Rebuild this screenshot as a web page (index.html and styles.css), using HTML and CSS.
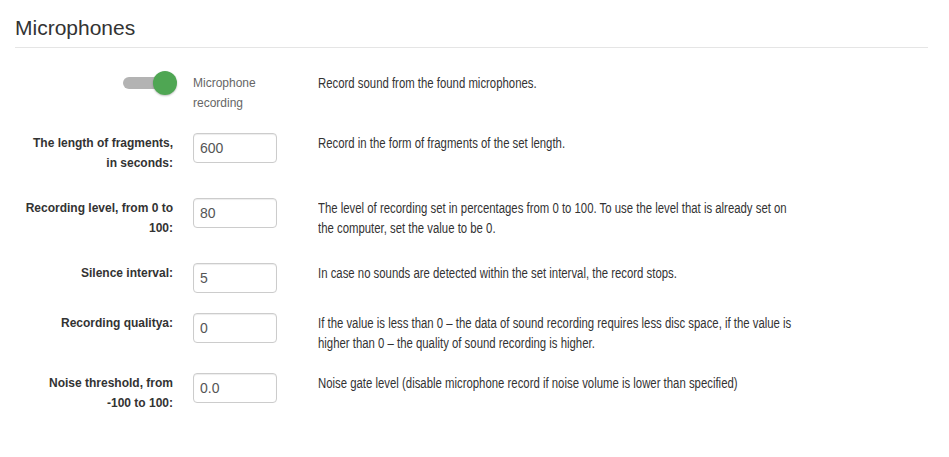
FILE: index.html
```html
<!DOCTYPE html>
<html>
<head>
<meta charset="utf-8">
<link rel="stylesheet" href="styles.css">
</head>
<body>
<div class="page">
  <h2 class="title">Microphones</h2>
  <div class="form">
    <div class="label toggle-cell">
      <span class="toggle"><span class="track"></span><span class="knob"></span></span>
    </div>
    <div class="toggle-text">Microphone recording</div>
    <div class="desc">Record sound from the found microphones.</div>

    <div class="label">The length of fragments, in seconds:</div>
    <div><input class="field" type="text" value="600"></div>
    <div class="desc">Record in the form of fragments of the set length.</div>

    <div class="label">Recording level, from 0 to 100:</div>
    <div><input class="field" type="text" value="80"></div>
    <div class="desc">The level of recording set in percentages from 0 to 100. To use the level that is already set on the computer, set the value to be 0.</div>

    <div class="label">Silence interval:</div>
    <div><input class="field" type="text" value="5"></div>
    <div class="desc">In case no sounds are detected within the set interval, the record stops.</div>

    <div class="label">Recording qualitya:</div>
    <div><input class="field" type="text" value="0"></div>
    <div class="desc">If the value is less than 0 – the data of sound recording requires less disc space, if the value is higher than 0 – the quality of sound recording is higher.</div>

    <div class="label">Noise threshold, from -100 to 100:</div>
    <div><input class="field" type="text" value="0.0"></div>
    <div class="desc">Noise gate level (disable microphone record if noise volume is lower than specified)</div>
  </div>
</div>
</body>
</html>
```

FILE: styles.css
```css
html, body {
  margin: 0;
  padding: 0;
  background: #fff;
}
body {
  font-family: "Liberation Sans", Arial, sans-serif;
  color: #333;
}
.page {
  width: 913px;
  padding-left: 15px;
}
.title {
  margin: 16px 0 0;
  padding-bottom: 7px;
  font-size: 21px;
  line-height: 24px;
  font-weight: normal;
  color: #333;
  border-bottom: 1px solid #e5e5e5;
}
.form {
  margin-top: 25px;
  margin-left: 8px;
  display: grid;
  grid-template-columns: 150px 84px 611px;
  column-gap: 20px;
  row-gap: 20px;
  align-items: start;
}
.label {
  font-size: 12px;
  line-height: 20px;
  font-weight: bold;
  text-align: right;
  color: #333;
  padding-bottom: 5px;
}
.toggle-cell {
  display: flex;
  justify-content: flex-end;
  padding-bottom: 0;
}
.toggle {
  position: relative;
  display: block;
  width: 54px;
  height: 24px;
  margin-top: -2px;
  margin-right: -4px;
}
.track {
  position: absolute;
  left: 0;
  top: 6px;
  width: 46px;
  height: 12px;
  border-radius: 6px;
  background: #b3b3b3;
}
.knob {
  position: absolute;
  right: 0;
  top: 0;
  width: 24px;
  height: 24px;
  border-radius: 50%;
  background: #4fa653;
  box-shadow: 0 1px 2px rgba(0,0,0,0.25);
}
.toggle-text {
  font-size: 12px;
  line-height: 20px;
  color: #666;
}
.field {
  box-sizing: border-box;
  display: block;
  width: 84px;
  height: 30px;
  margin: 0;
  padding: 0 6px;
  border: 1px solid #ccc;
  border-radius: 4px;
  box-shadow: inset 0 1px 1px rgba(0,0,0,0.075);
  font-family: "Liberation Sans", Arial, sans-serif;
  font-size: 14px;
  color: #555;
  background: #fff;
}
.desc {
  margin-left: 21px;
  font-size: 14px;
  line-height: 20px;
  color: #333;
  transform: scaleX(0.812);
  transform-origin: left top;
}
```
